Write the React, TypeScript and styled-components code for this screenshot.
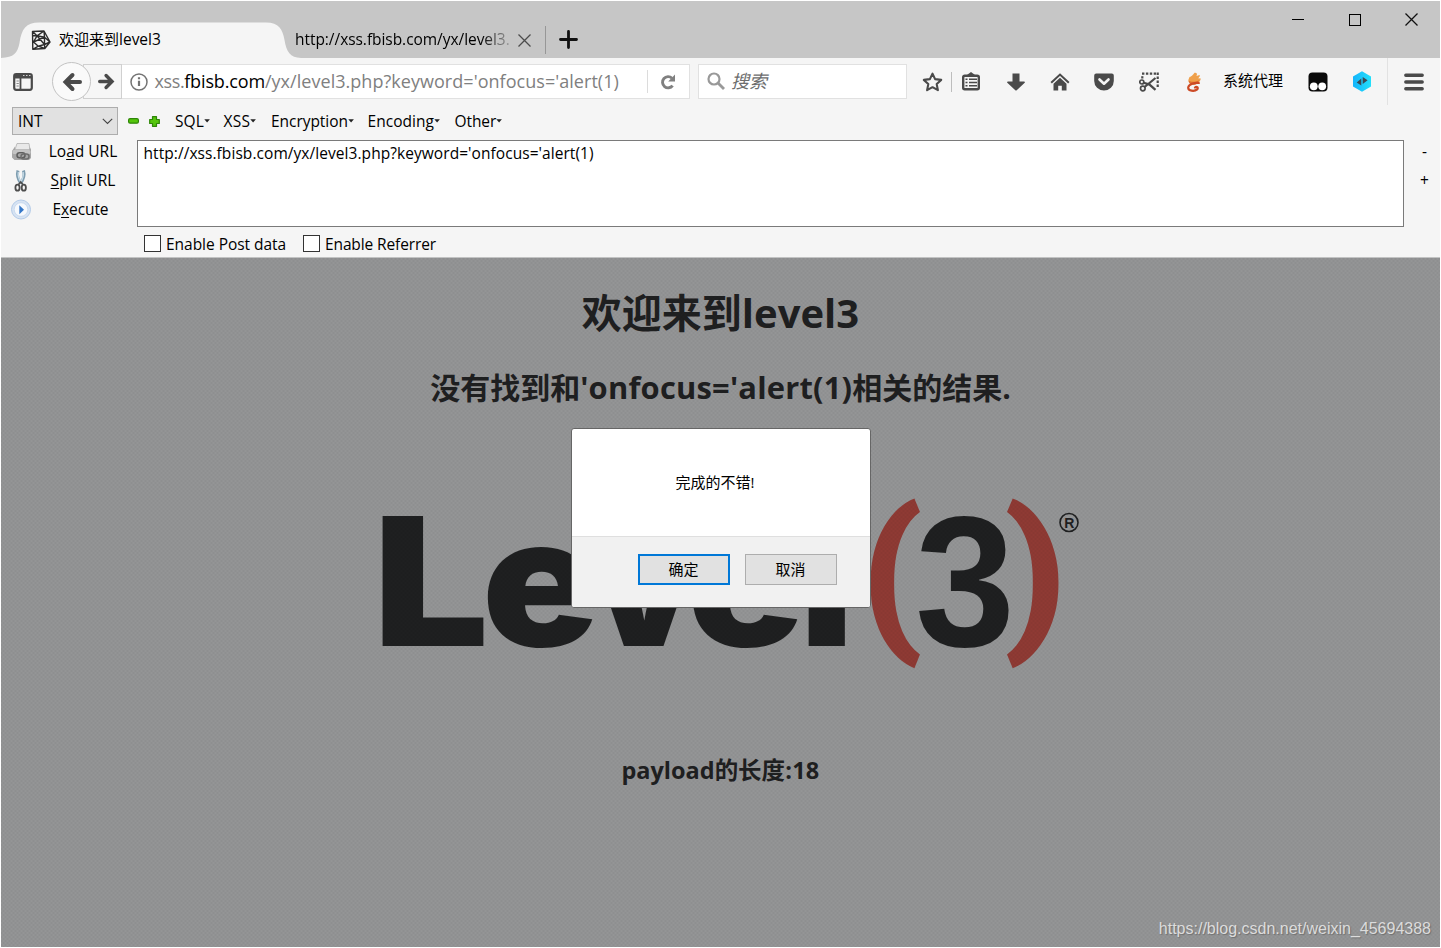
import React from 'react';
import styled, { createGlobalStyle } from 'styled-components';

const UI = `"Open Sans", "Noto Sans CJK SC", sans-serif`;
const INK = '#4a4a4a';

const Global = createGlobalStyle`
  *, *::before, *::after { box-sizing: border-box; }
  html, body { margin: 0; padding: 0; background: #fff; }
  body { font-family: ${UI}; font-size: 15px; color: #000; overflow: hidden; }
  svg { display: block; flex: none; }
`;

const Window = styled.div`
  width: 1441px;
  height: 948px;
  padding: 1px;
  display: flex;
  flex-direction: column;
  background: #fff;
`;

/* ---------- tab strip ---------- */

const TabStrip = styled.header`
  height: 57px;
  flex: none;
  display: flex;
  align-items: flex-end;
  background: #c6c6c6;
`;

const ActiveTab = styled.div`
  position: relative;
  width: 303px;
  height: 36px;
  display: flex;
  align-items: center;
  justify-content: space-between;
  padding: 0 35px 0 30px;
`;

const TabShape = styled.svg`
  position: absolute;
  left: 0;
  top: 0;
`;

const TabLabel = styled.span`
  position: relative;
  display: flex;
  align-items: center;
  gap: 8px;
  line-height: 24px;
  white-space: nowrap;
`;

const TabText = styled.span`
  padding-bottom: 2px;
`;

const Tab = styled.div`
  width: 251px;
  height: 36px;
  display: flex;
  align-items: center;
  justify-content: space-between;
  padding: 0 14px 0 1px;
  margin-left: -10px;
`;

const FadingTitle = styled.span`
  width: 216px;
  padding-bottom: 2px;
  white-space: nowrap;
  font-size: 15.5px;
  line-height: 24px;
  letter-spacing: -0.05px;
  mask-image: linear-gradient(to right, #000 86%, rgba(0, 0, 0, 0.15) 100%);
`;

const NewTab = styled.div`
  height: 28px;
  margin-bottom: 4px;
  padding: 0 13px 1px;
  border-left: 1px solid #979797;
  display: flex;
  align-items: center;
`;

const WindowControls = styled.div`
  margin-left: auto;
  align-self: flex-start;
  display: flex;
`;

const WindowButton = styled.div`
  width: 57px;
  height: 37px;
  display: flex;
  align-items: center;
  justify-content: center;
`;

/* ---------- navigation bar ---------- */

const NavBar = styled.nav`
  height: 47px;
  flex: none;
  display: flex;
  align-items: center;
  background: #f5f5f5;
  padding-left: 11px;
`;

const BackButton = styled.div`
  width: 39px;
  height: 39px;
  margin-left: 18px;
  flex: none;
  border: 1px solid #c3c3c3;
  border-radius: 50%;
  background: #fafafa;
  display: flex;
  align-items: center;
  justify-content: center;
  z-index: 1;
`;

const ForwardButton = styled.div`
  width: 39px;
  height: 35px;
  margin-left: -8px;
  flex: none;
  padding-left: 14px;
  border: 1px solid #d0d0d0;
  background: #f6f6f6;
  display: flex;
  align-items: center;
`;

const AddressField = styled.div`
  width: 568px;
  height: 35px;
  flex: none;
  display: flex;
  align-items: center;
  padding-left: 8px;
  background: #fff;
  border: 1px solid #e1e1e1;
  border-left: 0;
`;

const Address = styled.div`
  width: 492px;
  margin-left: 6.5px;
  padding-bottom: 2px;
  flex: none;
  font-size: 18px;
  line-height: 28px;
  color: #808080;
  white-space: nowrap;
`;

const AddressPart = styled.span<{ $spacing: number; $strong?: boolean }>`
  letter-spacing: ${p => p.$spacing}px;
  color: ${p => (p.$strong ? '#000' : 'inherit')};
`;

const Reload = styled.div`
  height: 23px;
  width: 42px;
  border-left: 1px solid #dcdcdc;
  display: flex;
  align-items: center;
  padding-left: 12px;
`;

const SearchField = styled.div`
  width: 209px;
  height: 35px;
  margin-left: 8px;
  padding: 0 0 1px 8px;
  flex: none;
  display: flex;
  align-items: center;
  gap: 6px;
  background: #fff;
  border: 1px solid #e1e1e1;
  color: #6d6d6d;
  font-size: 18px;
  font-style: italic;
  line-height: 28px;
`;

const ToolCell = styled.div<{ $w?: number; $gap?: number }>`
  width: ${p => p.$w ?? 44}px;
  margin-left: ${p => p.$gap ?? 0}px;
  height: 35px;
  flex: none;
  display: flex;
  align-items: center;
  justify-content: center;
`;

const ProxyLabel = styled.span`
  width: 62px;
  margin-left: 6px;
  padding-bottom: 3px;
  flex: none;
  text-align: center;
  line-height: 24px;
  white-space: nowrap;
`;

const Divider = styled.div<{ $h: number; $color: string; $gap?: number }>`
  width: 1px;
  height: ${p => p.$h}px;
  flex: none;
  margin-left: ${p => p.$gap ?? 0}px;
  background: ${p => p.$color};
`;

/* ---------- HackBar ---------- */

const HackBar = styled.section`
  height: 153px;
  flex: none;
  background: #f5f5f5;
  border-bottom: 1px solid #c2c3c3;
  display: flex;
  flex-direction: column;
  font-size: 15.5px;
`;

const MenuRow = styled.div`
  height: 32px;
  display: flex;
  align-items: center;
  padding: 0 0 0 11px;
`;

const Select = styled.div`
  width: 106px;
  height: 28px;
  flex: none;
  border: 1px solid #adadad;
  background: #e1e1e1;
  display: flex;
  align-items: center;
  justify-content: space-between;
  padding: 0 4px 0 5px;
`;

const PlusMinus = styled.div`
  display: flex;
  align-items: center;
  gap: 10px;
  margin: 0 15px 0 10px;
`;

const MenuItem = styled.div<{ $w: number; $spacing: number }>`
  width: ${p => p.$w}px;
  flex: none;
  display: flex;
  align-items: center;
  line-height: 24px;
  letter-spacing: ${p => p.$spacing}px;
  white-space: nowrap;
`;

const Body = styled.div`
  display: flex;
  height: 91px;
`;

const Actions = styled.div`
  width: 136px;
  flex: none;
  display: flex;
  flex-direction: column;
`;

const Action = styled.div`
  height: 29px;
  display: flex;
  align-items: center;
  padding-left: 9px;
`;

const ActionLabel = styled.span<{ $spacing: number; $w?: number }>`
  width: ${p => p.$w ?? 102}px;
  padding-bottom: 1px;
  text-align: center;
  letter-spacing: ${p => p.$spacing}px;
  line-height: 24px;
  u { text-underline-offset: 2px; text-decoration-thickness: 1px; }
`;

const UrlArea = styled.div`
  width: 1267px;
  height: 87px;
  margin-top: 3px;
  flex: none;
  background: #fff;
  border: 1px solid #7a7a7a;
  padding: 0 5.5px;
  line-height: 24px;
  letter-spacing: 0.06px;
`;

const SideButtons = styled.div`
  width: 35px;
  display: flex;
  flex-direction: column;
`;

const SideButton = styled.div`
  height: 29px;
  padding: 0 0 1px 6px;
  display: flex;
  align-items: center;
  justify-content: center;
`;

const CheckRow = styled.div`
  flex: 1;
  display: flex;
  align-items: center;
  padding: 2px 0 0 143px;
`;

const Check = styled.label<{ $w: number; $spacing: number }>`
  width: ${p => p.$w}px;
  display: flex;
  align-items: center;
  gap: 5px;
  line-height: 24px;
  letter-spacing: ${p => p.$spacing}px;
  white-space: nowrap;
`;

const Box = styled.span`
  width: 17px;
  height: 17px;
  margin-top: -1px;
  flex: none;
  border: 1px solid #333;
  background: #fff;
`;

/* ---------- page ---------- */

const Page = styled.main`
  position: relative;
  flex: 1;
  width: 1439px;
  overflow: hidden;
  display: flex;
  flex-direction: column;
  align-items: center;
  background: #949596;
  color: #1f2021;
  font-weight: 700;
  white-space: nowrap;
`;

const Weave = styled.div`
  position: absolute;
  inset: 0;
  background-image:
    linear-gradient(45deg, rgba(0, 0, 0, 0.02) 25%, transparent 25% 50%, rgba(0, 0, 0, 0.02) 50% 75%, transparent 75%),
    linear-gradient(-45deg, rgba(0, 0, 0, 0.02) 25%, transparent 25% 50%, rgba(0, 0, 0, 0.02) 50% 75%, transparent 75%);
  background-size: 4px 4px;
`;

const Title = styled.h1`
  margin: 26px 0 0;
  font-size: 40px;
  line-height: 58px;
`;

const Subtitle = styled.h2`
  margin: 23px 0 0;
  font-size: 30px;
  line-height: 44px;
`;

const Latin = styled.span<{ $spacing?: number; $size?: number }>`
  letter-spacing: ${p => p.$spacing ?? 0}px;
  ${p => p.$size && `font-size: ${p.$size}px;`}
`;

const Logo = styled.svg`
  margin-top: 84px;
`;

const Footer = styled.h3`
  margin: 79px 0 0;
  font-size: 23.5px;
  line-height: 34px;
`;

const Watermark = styled.div`
  position: absolute;
  right: 9px;
  bottom: 8px;
  font: 400 16px/20px "Liberation Sans", sans-serif;
  color: #dcdcdc;
  text-shadow: 1px 1px 1px rgba(70, 70, 70, 0.45);
`;

/* ---------- dialog ---------- */

const Dialog = styled.div`
  position: absolute;
  left: 570px;
  top: 170px;
  width: 300px;
  height: 180px;
  border: 1px solid #666;
  border-radius: 3px;
  overflow: hidden;
  background: #fff;
  color: #000;
  font-weight: 400;
  display: flex;
  flex-direction: column;
`;

const Message = styled.div`
  height: 107px;
  padding: 0 12px 2px 0;
  display: flex;
  align-items: center;
  justify-content: center;
`;

const DialogActions = styled.div`
  flex: 1;
  display: flex;
  justify-content: flex-end;
  gap: 15px;
  padding: 17px 33px 0 0;
  background: #f1f1f1;
  border-top: 1px solid #dfdfdf;
`;

const DialogButton = styled.button<{ $primary?: boolean }>`
  width: 92px;
  height: 31px;
  padding: 0 1px 2px 0;
  font: 400 15px/20px ${UI};
  color: #000;
  background: #e1e1e1;
  border: ${p => (p.$primary ? '2px solid #0078d7' : '1px solid #adadad')};
`;

/* ---------- icons ---------- */

const Close = ({ color = '#4c4c4c' }: { color?: string }) => (
  <svg width="13" height="13" viewBox="0 0 13 13" stroke={color} strokeWidth="1.3" fill="none">
    <path d="M.5.5l12 12M12.5.5l-12 12" />
  </svg>
);

const Favicon = () => (
  <svg width="20" height="20" viewBox="0 0 20 20" stroke="#2c2c2c" strokeWidth="1.4" fill="none" strokeLinejoin="round">
    <path d="M1.500 1.500L13 1l6 11-5.200 6.500-12 .8zM1.500 1.500L6 5.800 13 1M1.500 5.500L6 5.800 2.500 12l4.800 4.200L1.800 19.300M6 5.800l7.500 1.400v7.300l-6.200 1.700M13.500 7.200L13 1M13.500 7.200L19 12l-5.500 2.500.3 4M2.500 12l11-4.800M6 5.800l7.500 8.700M7.300 16.200l6.500 2.300" />
  </svg>
);

const SidebarIcon = () => (
  <svg width="22" height="18" viewBox="-1 0 22 18">
    <rect x="1.200" y="1.200" width="17.600" height="15.600" rx="2" fill="none" stroke={INK} strokeWidth="2.200" />
    <rect x="1" y="1" width="18" height="4.500" rx="1.500" fill={INK} />
    <path d="M10 2.500h1.500M13 2.500h1.500M16 2.500h1.500" stroke="#cfcfcf" strokeWidth="1" />
    <path d="M7.500 5v12" stroke={INK} strokeWidth="1.800" />
    <path d="M3.500 8h2.300M3.500 10.500h2.300M3.500 13h2.300" stroke="#8a8a8a" strokeWidth="1.100" />
  </svg>
);

const Arrow = ({ flip = false, s = 20 }: { flip?: boolean; s?: number }) => (
  <svg width={s} height={s} viewBox="0 0 20 20" fill="none" stroke={INK} strokeWidth="4" strokeLinecap="round">
    <path d={flip ? 'M2 10H16M9.500 3L16.500 10 9.500 17' : 'M18 10H4M10.500 3L3.500 10 10.500 17'} />
  </svg>
);

const InfoIcon = () => (
  <svg width="18" height="18" viewBox="0 0 18 18">
    <circle cx="9" cy="9" r="8" fill="none" stroke="#737373" strokeWidth="1.500" />
    <path d="M9 7.700v5.300M9 4.200v2" stroke="#737373" strokeWidth="2.200" />
  </svg>
);

const ReloadIcon = () => (
  <svg width="16" height="16" viewBox="0 0 16 16">
    <path d="M12 4.200A5.600 5.600 0 1 0 12.600 11.600" fill="none" stroke="#808080" strokeWidth="2.900" />
    <path d="M15 .6v7H8.200z" fill="#808080" />
  </svg>
);

const SearchIcon = () => (
  <svg width="18" height="18" viewBox="0 0 18 18" fill="none" stroke="#999">
    <circle cx="7" cy="7" r="5.500" strokeWidth="2.200" />
    <path d="M11 11l6 6" strokeWidth="2.800" />
  </svg>
);

const StarIcon = () => (
  <svg width="21" height="20" viewBox="0 0 21 20">
    <path d="M10.500 1.600l2.600 5.500 6.100.8-4.500 4.200 1.200 6.100-5.400-3-5.400 3 1.200-6.100-4.500-4.200 6.100-.8z" fill="none" stroke={INK} strokeWidth="2.100" strokeLinejoin="round" />
  </svg>
);

const ListIcon = () => (
  <svg width="18" height="19" viewBox="0 0 18 19" fill="none" stroke={INK}>
    <path d="M5 3L9 0l4 3z" fill={INK} stroke="none" />
    <rect x="1.200" y="3.700" width="15.600" height="13.600" rx="1.500" strokeWidth="2.400" />
    <path d="M3.500 7.300h2M7 7.300h8M3.500 10.500h2M7 10.500h8M3.500 13.700h2M7 13.700h8" strokeWidth="1.500" />
  </svg>
);

const DownloadIcon = () => (
  <svg width="18" height="18" viewBox="0 0 18 18" fill={INK}>
    <path d="M5.500.5h7v8h4.700a.7.700 0 0 1 .5 1.200L9.700 17.200a1 1 0 0 1-1.400 0L.3 9.700a.7.700 0 0 1 .5-1.200h4.700z" />
  </svg>
);

const HomeIcon = () => (
  <svg width="20" height="18" viewBox="0 0 20 18">
    <path d="M1.200 9.800L10 1.500l8.800 8.300" fill="none" stroke={INK} strokeWidth="2" />
    <path d="M10 4.800l6.500 6V17.500h-4.700v-4.800H8.200v4.800H3.500v-6.700z" fill={INK} />
  </svg>
);

const PocketIcon = () => (
  <svg width="20" height="18" viewBox="0 0 20 18">
    <path d="M2.200.5h15.600a2 2 0 0 1 2 2v5.500a9.800 9.500 0 0 1-19.600 0V2.500a2 2 0 0 1 2-2z" fill={INK} />
    <path d="M5.500 6.500L10 10.700l4.500-4.200" fill="none" stroke="#f5f5f5" strokeWidth="2.600" strokeLinecap="round" strokeLinejoin="round" />
  </svg>
);

const ClipIcon = () => (
  <svg width="20" height="20" viewBox="0 0 20 20" fill="none" stroke={INK}>
    <path d="M3 1.700h14" strokeWidth="2.200" strokeDasharray="2.400 1.500" />
    <path d="M18.700.6v16" strokeWidth="2.200" strokeDasharray="2.400 1.600" />
    <path d="M3.300 4.200v2.300" strokeWidth="2.200" />
    <circle cx="2.800" cy="10" r="2" strokeWidth="1.700" />
    <circle cx="3.800" cy="16.500" r="2.300" strokeWidth="1.700" />
    <path d="M4.800 10.800l5.700 1.800 6 5.200M5.600 15L16.500 6" strokeWidth="2.200" />
  </svg>
);

const FlameIcon = () => (
  <svg width="16" height="20" viewBox="0 0 16 20">
    <path d="M3.500 5C5.500 4.500 7 3 8.500.8 11 .5 11.500 2 10.500 4L13.500 3c1 1-.2 2.200-1.400 3.200l2.700.4c-.4 2.800-2.600 5.800-6.200 5.800C5 12.600 2 10.500 2.500 7.500z" fill="#efa04a" />
    <path d="M2.500 8.500c2.500 1.500 6.500 2 10.500-.2-.8 3-3 4.500-6 4.400C4.500 12.600 2.600 11 2.500 8.500z" fill="#e0702f" />
    <path d="M12.800 11C9 10.500 2.600 12 2.200 15.500c-.2 3.600 6.300 4.200 9 1.900 1.600-1.900-.7-3.200-2.200-1.900" fill="none" stroke="#cc4a26" strokeWidth="2.200" strokeLinecap="round" />
  </svg>
);

const MonkeyIcon = () => (
  <svg width="20" height="20" viewBox="0 0 20 20">
    <rect x=".5" y=".5" width="19" height="19" rx="4" fill="#0a0a0a" />
    <circle cx="5.800" cy="14.300" r="3.900" fill="#fff" />
    <circle cx="14.200" cy="14.300" r="3.900" fill="#fff" />
  </svg>
);

const HexIcon = () => (
  <svg width="20" height="21" viewBox="0 0 20 21">
    <defs>
      <linearGradient id="hex" x1="0" x2="1">
        <stop offset="0" stopColor="#14b4fb" />
        <stop offset="1" stopColor="#22e0fb" />
      </linearGradient>
    </defs>
    <path d="M10 .3l9 5.200v10L10 20.700 1 15.500v-10z" fill="url(#hex)" />
    <path d="M9.300 7.600v7L4.700 11.600zM10.700 6l4.900 3.200-4.900 3.800z" fill="#3a4a55" />
  </svg>
);

const MenuIcon = () => (
  <svg width="20" height="18" viewBox="0 0 20 18" stroke={INK} strokeWidth="3.400" strokeLinecap="round">
    <path d="M1.800 2.300h16.400M1.800 9h16.400M1.800 15.700h16.400" />
  </svg>
);

const Caret = () => (
  <svg width="6" height="4" viewBox="-.3 0 6 4">
    <path d="M0 .2h5.600L2.800 3.600z" fill="#222" />
  </svg>
);

const Chevron = () => (
  <svg width="11" height="7" viewBox="0 0 11 7" fill="none" stroke="#444" strokeWidth="1.100">
    <path d="M.8.8l4.700 4.700L10.200.8" />
  </svg>
);

const MinusBadge = () => (
  <svg width="11" height="6" viewBox="0 0 11 6">
    <rect x=".6" y=".6" width="9.800" height="4.600" rx="1.500" fill="#55c60c" stroke="#2f8608" strokeWidth="1.200" />
  </svg>
);

const PlusBadge = () => (
  <svg width="11" height="11" viewBox="0 0 11 11">
    <path d="M3.500.7h4v2.800h2.800v4H7.500v2.800h-4V7.500H.7v-4h2.800z" fill="#55c60c" stroke="#2f8608" strokeWidth="1.200" strokeLinejoin="round" />
  </svg>
);

const LoadIcon = () => (
  <svg width="22" height="20" viewBox="0 0 22 20">
    <path d="M7 1.500h12l1 6H5z" fill="#e9e9e9" stroke="#b0b0b0" strokeWidth=".8" />
    <path d="M5 4.500L2 9v6.500L4.500 18H19l2-2V7.500L19.500 5v3H5z" fill="#a6a6a6" />
    <rect x="2.500" y="8" width="18" height="4" rx="1.500" fill="#c4c4c4" />
    <rect x="7" y="10.800" width="8" height="5" rx="2.500" fill="none" stroke="#5e5e5e" strokeWidth="1.500" />
    <rect x="11" y="12" width="8" height="5" rx="2.500" fill="none" stroke="#6e6e6e" strokeWidth="1.500" />
  </svg>
);

const SplitIcon = () => (
  <svg width="22" height="24" viewBox="0 0 22 24" fill="none">
    <path d="M8 1.500c-1.200 4 0 9 3 13M13.500 1.500c1.200 4 0 9-3 13" stroke="#7e9db0" strokeWidth="3" />
    <path d="M8.300 3c-.5 3.500.5 7 2.500 10M13.200 3c.5 3.500-.5 7-2.500 10" stroke="#c9dde8" strokeWidth="1.200" />
    <ellipse cx="7.500" cy="18.700" rx="2.100" ry="3" stroke="#4d4d4d" strokeWidth="1.800" />
    <ellipse cx="13.800" cy="18.700" rx="2.100" ry="3" stroke="#4d4d4d" strokeWidth="1.800" />
    <path d="M8.500 15.500l2.200-2.500 2.200 2.500" stroke="#4d4d4d" strokeWidth="1.700" />
  </svg>
);

const ExecuteIcon = () => (
  <svg width="22" height="22" viewBox="0 0 22 22">
    <circle cx="11" cy="10.500" r="9.500" fill="#d6e3f3" stroke="#b4cbe8" strokeWidth="1" />
    <circle cx="11" cy="10.500" r="6.800" fill="#f6f9fd" stroke="#c4d5ec" strokeWidth=".8" />
    <path d="M9.300 6.300l4.700 4.400-4.700 4.600z" fill="#3577c8" />
  </svg>
);

const LevelLogo = () => {
  const dark = '#1f2021';
  const heavy = { fontFamily: 'Inter', fontWeight: 900, fontSize: 179, fill: dark };
  const bracket = { fontFamily: 'Roboto', fontWeight: 900, fontSize: 168, fill: '#8f3a34' };
  return (
    <Logo width="720" height="180" viewBox="360.5 494 720 180">
      <text {...heavy} transform="translate(372.500 646) scale(1.146 1)">L</text>
      <text {...heavy} transform="translate(481.500 646) scale(1.080 1)">e</text>
      <text {...heavy} transform="translate(589 646) scale(.960 1)">v</text>
      <text {...heavy} transform="translate(686.500 646) scale(1.080 1)">e</text>
      <text {...heavy} transform="translate(799 646) scale(1.030 1)">l</text>
      <text {...bracket} transform="translate(859.500 631) scale(1.070 1)">(</text>
      <text fontFamily="Liberation Sans" fontWeight="700" fontSize="186" fill={dark} transform="translate(914.500 646) scale(.967 1)">3</text>
      <text {...bracket} transform="translate(1003 631) scale(1.070 1)">)</text>
      <circle cx="1068.500" cy="522.500" r="9" fill="none" stroke={dark} strokeWidth="1.600" />
      <text x="1068.700" y="527.600" textAnchor="middle" fontFamily="Liberation Sans" fontWeight="700" fontSize="14" fill={dark}>R</text>
    </Logo>
  );
};

const menus: [string, number, number][] = [
  ['SQL', 48.5, 0.1],
  ['XSS', 47.5, 0.3],
  ['Encryption', 96.5, -0.05],
  ['Encoding', 87, 0.05],
  ['Other', 60, -0.1],
];

export default function App() {
  return (
    <Window>
      <Global />
      <TabStrip>
        <ActiveTab>
          <TabShape width="303" height="36" viewBox="0 0 303 36">
            <path d="M0 36C13 35.500 16.500 31 18.500 21C20.500 7 25 .5 38 .5H265C278 .5 281.500 7 283.500 18C285.500 30 289 35.500 300 36z" fill="#f5f5f5" />
          </TabShape>
          <TabLabel><Favicon /><TabText>欢迎来到<Latin $size={15.5}>level3</Latin></TabText></TabLabel>
          <Close />
        </ActiveTab>
        <Tab>
          <FadingTitle>http://xss.fbisb.com/yx/level3.</FadingTitle>
          <Close />
        </Tab>
        <NewTab>
          <svg width="19" height="19" viewBox="0 0 19 19" stroke="#111" strokeWidth="2.800" strokeLinecap="round">
            <path d="M9.500 1.500v16M1.500 9.500h16" />
          </svg>
        </NewTab>
        <WindowControls>
          <WindowButton>
            <svg width="13" height="13" viewBox="-1 0 13 13" stroke="#000"><path d="M0 6.500h12" /></svg>
          </WindowButton>
          <WindowButton>
            <svg width="13" height="13" viewBox="-1 -1 13 13" stroke="#000" fill="none"><rect x=".5" y=".5" width="11" height="11" /></svg>
          </WindowButton>
          <WindowButton><Close color="#111" /></WindowButton>
        </WindowControls>
      </TabStrip>

      <NavBar>
        <SidebarIcon />
        <BackButton><Arrow /></BackButton>
        <ForwardButton><Arrow flip s={17} /></ForwardButton>
        <AddressField>
          <InfoIcon />
          <Address>
            <AddressPart $spacing={-0.4}>xss.</AddressPart>
            <AddressPart $spacing={-0.15} $strong>fbisb.com</AddressPart>
            <AddressPart $spacing={0.04}>/yx/level3.php?keyword='onfocus='alert(1)</AddressPart>
          </Address>
          <Reload><ReloadIcon /></Reload>
        </AddressField>
        <SearchField><SearchIcon />搜索</SearchField>
        <ToolCell $w={37} $gap={7}><StarIcon /></ToolCell>
        <Divider $h={20} $color="#bdbdbd" />
        <ToolCell $w={38}><ListIcon /></ToolCell>
        <ToolCell $gap={4}><DownloadIcon /></ToolCell>
        <ToolCell><HomeIcon /></ToolCell>
        <ToolCell><PocketIcon /></ToolCell>
        <ToolCell $gap={1}><ClipIcon /></ToolCell>
        <ToolCell $gap={1}><FlameIcon /></ToolCell>
        <ProxyLabel>系统代理</ProxyLabel>
        <ToolCell $gap={12}><MonkeyIcon /></ToolCell>
        <ToolCell><HexIcon /></ToolCell>
        <Divider $h={47} $color="#e2e2e2" $gap={3} />
        <ToolCell $gap={4}><MenuIcon /></ToolCell>
      </NavBar>

      <HackBar>
        <MenuRow>
          <Select>INT<Chevron /></Select>
          <PlusMinus><MinusBadge /><PlusBadge /></PlusMinus>
          {menus.map(([name, w, spacing]) => (
            <MenuItem key={name} $w={w} $spacing={spacing}>{name}<Caret /></MenuItem>
          ))}
        </MenuRow>
        <Body>
          <Actions>
            <Action><LoadIcon /><ActionLabel $spacing={0}>Lo<u>a</u>d URL</ActionLabel></Action>
            <Action><SplitIcon /><ActionLabel $spacing={0.05}><u>S</u>plit URL</ActionLabel></Action>
            <Action><ExecuteIcon /><ActionLabel $spacing={-0.1} $w={97}>E<u>x</u>ecute</ActionLabel></Action>
          </Actions>
          <UrlArea>http://xss.fbisb.com/yx/level3.php?keyword='onfocus='alert(1)</UrlArea>
          <SideButtons>
            <SideButton>-</SideButton>
            <SideButton>+</SideButton>
          </SideButtons>
        </Body>
        <CheckRow>
          <Check $w={159} $spacing={-0.03}><Box />Enable Post data</Check>
          <Check $w={160} $spacing={-0.12}><Box />Enable Referrer</Check>
        </CheckRow>
      </HackBar>

      <Page>
        <Title>欢迎来到<Latin>level3</Latin></Title>
        <Subtitle>没有找到和<Latin $spacing={0.2} $size={30.9}>'onfocus='alert(1)</Latin>相关的结果.</Subtitle>
        <LevelLogo />
        <Footer><Latin>payload</Latin>的长度<Latin $spacing={0.3}>:18</Latin></Footer>
        <Weave />
        <Watermark>https://blog.csdn.net/weixin_45694388</Watermark>
        <Dialog>
          <Message>完成的不错!</Message>
          <DialogActions>
            <DialogButton $primary>确定</DialogButton>
            <DialogButton>取消</DialogButton>
          </DialogActions>
        </Dialog>
      </Page>
    </Window>
  );
}
